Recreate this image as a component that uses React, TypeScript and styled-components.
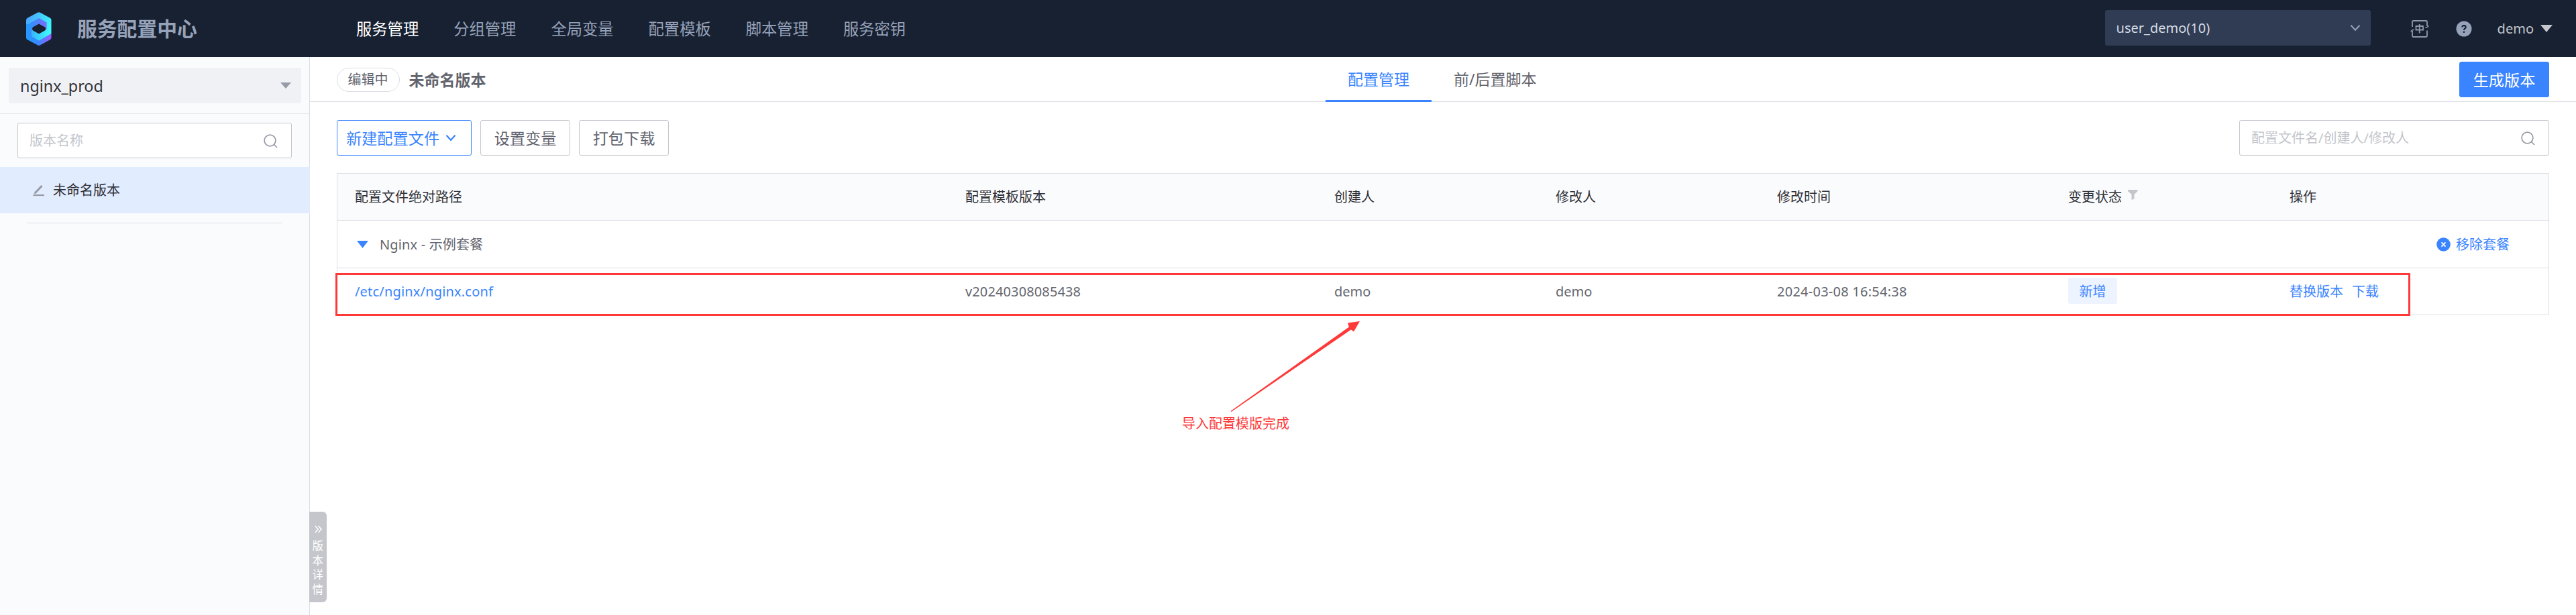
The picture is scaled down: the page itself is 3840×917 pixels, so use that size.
import React from 'react';
import styled, { createGlobalStyle, css } from 'styled-components';

const GlobalStyle = createGlobalStyle`
  * { box-sizing: border-box; }
  html, body { margin: 0; padding: 0; background: #fff; overflow: hidden; }
  body {
    font-family: "Noto Sans", "Noto Sans CJK SC", sans-serif;
    font-size: 20px;
    line-height: 28px;
    color: #63656e;
    white-space: nowrap;
  }
  svg { display: block; flex: none; }
`;

const Page = styled.div`
  position: relative;
  display: flex;
  flex-direction: column;
  width: 3840px;
  height: 917px;
  overflow: hidden;
`;

/* ---------- top bar ---------- */
const TopBar = styled.header`
  display: flex;
  align-items: center;
  height: 85px;
  flex: none;
  padding: 0 35px 0 39px;
  background: #182132;
`;
const Brand = styled.div`
  display: flex;
  align-items: center;
  gap: 38px;
  width: 492px;
`;
const BrandName = styled.span`
  font-size: 29.8px;
  line-height: 40px;
  font-weight: 700;
  color: #96a2b9;
`;
const Nav = styled.nav`
  display: flex;
  gap: 52px;
  flex: 1;
`;
const NavItem = styled.a<{ $active?: boolean }>`
  font-size: 23.3px;
  line-height: 32px;
  color: ${(p) => (p.$active ? '#fff' : '#96a2b9')};
`;
const BizSelect = styled.div`
  display: flex;
  align-items: center;
  justify-content: space-between;
  width: 396px;
  height: 53px;
  margin: -2px 59px 0 0;
  padding: 0 15px 0 17px;
  border-radius: 3px;
  background: #303c53;
  color: #d3d9e4;
`;
const HeaderIcon = styled.span<{ $gap: number }>`
  margin-right: ${(p) => p.$gap}px;
`;
const UserMenu = styled.div`
  display: flex;
  align-items: center;
  gap: 10px;
  color: #c4c6cc;
`;

/* ---------- sidebar ---------- */
const Body = styled.div`
  display: flex;
  flex: 1;
  min-height: 0;
`;
const Sidebar = styled.aside`
  position: relative;
  width: 462px;
  flex: none;
  background: #fafbfd;
  border-right: 1px solid #dcdee5;
`;
const ServiceWrap = styled.div`
  height: 85px;
  padding: 16px 12px 0 13px;
  border-bottom: 1px solid #e5e7ec;
`;
const ServiceSelect = styled.div`
  display: flex;
  align-items: center;
  justify-content: space-between;
  height: 53px;
  padding: 0 15px 0 17px;
  border-radius: 3px;
  background: #f0f1f5;
  color: #313238;
  font-size: 23.3px;
`;
const SearchBox = styled.div<{ $width: number }>`
  display: flex;
  align-items: center;
  justify-content: space-between;
  width: ${(p) => p.$width}px;
  height: 53px;
  padding: 1px 20px 0 17px;
  border: 1px solid #c4c6cc;
  border-radius: 3px;
  background: #fff;
  color: #c4c6cc;
`;
const SideSearch = styled.div`
  padding: 13px 26px;
`;
const VersionItem = styled.div`
  display: flex;
  align-items: center;
  gap: 12px;
  height: 69px;
  padding: 1px 0 0 49px;
  margin-right: -1px;
  background: #e1ecff;
  color: #313238;
`;
const SideDivider = styled.div`
  height: 1px;
  margin: 14px 40px 0;
  background: #dcdee5;
`;
const DetailHandle = styled.div`
  position: absolute;
  left: 461px;
  top: 678px;
  display: flex;
  flex-direction: column;
  align-items: center;
  width: 26px;
  height: 135px;
  padding-top: 20px;
  border-radius: 0 6px 6px 0;
  background: #c4c6cc;
  color: #fff;
  font-size: 16.5px;
  line-height: 21.7px;
`;
const HandleText = styled.span`
  width: 17px;
  margin-top: 8px;
  white-space: normal;
  word-break: break-all;
`;

/* ---------- main ---------- */
const Main = styled.main`
  flex: 1;
  min-width: 0;
`;
const VersionBar = styled.div`
  display: grid;
  grid-template-columns: 1474px 1fr auto;
  height: 67px;
  padding: 0 40px;
  border-bottom: 1px solid #dcdee5;
`;
const VersionInfo = styled.div`
  display: flex;
  align-items: center;
  gap: 14px;
`;
const StatusPill = styled.span`
  display: flex;
  align-items: center;
  height: 36px;
  padding: 0 16px 0 15.5px;
  border: 1px solid #dcdee5;
  border-radius: 18px;
`;
const VersionName = styled.strong`
  font-size: 23px;
  line-height: 32px;
  font-weight: 700;
`;
const Tabs = styled.div`
  display: flex;
`;
const Tab = styled.span<{ $active?: boolean }>`
  height: 67px;
  padding: 0 33px;
  font-size: 23px;
  line-height: 67px;
  ${(p) =>
    p.$active &&
    css`
      color: #3a84ff;
      border-bottom: 3px solid #3a84ff;
    `}
`;
const Button = styled.button<{ $kind?: 'primary' | 'outline'; $width: number }>`
  display: flex;
  align-items: center;
  justify-content: center;
  gap: 9px;
  width: ${(p) => p.$width}px;
  height: 53px;
  padding: 0;
  border: 1px solid #c4c6cc;
  border-radius: 3px;
  background: #fff;
  color: #63656e;
  font: 400 23.2px/32px "Noto Sans", "Noto Sans CJK SC", sans-serif;
  ${(p) =>
    p.$kind === 'primary' &&
    css`
      margin-top: 7px;
      border-color: #3a84ff;
      background: #3a84ff;
      color: #fff;
    `}
  ${(p) =>
    p.$kind === 'outline' &&
    css`
      justify-content: flex-start;
      padding-left: 13px;
      border-color: #3a84ff;
      color: #3a84ff;
    `}
`;
const Content = styled.section`
  padding: 27px 40px 0;
`;
const Toolbar = styled.div`
  display: flex;
  gap: 13px;
`;
const ToolbarSearch = styled.div`
  margin-left: auto;
`;

const Table = styled.div`
  position: relative;
  margin-top: 26px;
  border: 1px solid #dcdee5;
  border-bottom: 0;
`;
const Row = styled.div<{ $head?: boolean }>`
  display: grid;
  grid-template-columns: 910px 550px 330px 330px 434px 330px 1fr;
  align-items: center;
  height: 70px;
  border-bottom: 1px solid #dcdee5;
  ${(p) =>
    p.$head &&
    css`
      background: #fafbfd;
      color: #313238;
    `}
`;
const Cell = styled.div<{ $link?: boolean; $spacing?: number }>`
  display: flex;
  align-items: center;
  gap: 13px;
  padding: 1px 0 0 26px;
  letter-spacing: ${(p) => p.$spacing ?? 0}px;
  ${(p) => p.$link && 'color: #3a84ff;'}
`;
const GroupRow = styled.div`
  display: flex;
  align-items: center;
  justify-content: space-between;
  height: 71px;
  padding: 1px 58px 0 29px;
  border-bottom: 1px solid #dcdee5;
`;
const GroupTitle = styled.span`
  display: flex;
  align-items: center;
  gap: 17px;
  letter-spacing: 0.15px;
`;
const RemoveLink = styled.a`
  display: flex;
  align-items: center;
  gap: 8px;
  color: #3a84ff;
`;
const Tag = styled.span`
  height: 39px;
  padding: 0 16.5px;
  border-radius: 3px;
  background: #edf4ff;
  color: #3a84ff;
  line-height: 41px;
  margin-top: -3px;
`;
const FilterIcon = styled.span`
  margin: -7px 0 0 -4px;
`;

/* ---------- annotation over the page ---------- */
const Highlight = styled.div`
  position: absolute;
  left: 500px;
  top: 407px;
  width: 3093px;
  height: 64px;
  border: 3px solid #ff3838;
`;
const Arrow = styled.svg`
  position: absolute;
  left: 1830px;
  top: 475px;
`;
const Note = styled.span`
  position: absolute;
  left: 1762px;
  top: 618px;
  color: #ff3838;
`;

const Logo = () => (
  <svg width="38" height="50" viewBox="0 0 38 50">
    <defs>
      <linearGradient id="lgTop" x1="0" y1="0" x2="1" y2="0.4">
        <stop offset="0" stopColor="#4c9bff" />
        <stop offset="1" stopColor="#3cf6fb" />
      </linearGradient>
      <linearGradient id="lgLeft" x1="0" y1="0" x2="1" y2="0">
        <stop offset="0" stopColor="#10a0ff" />
        <stop offset="0.5" stopColor="#3f86ff" />
        <stop offset="1" stopColor="#9a5cff" />
      </linearGradient>
      <linearGradient id="lgInner" x1="0" y1="0" x2="1" y2="0">
        <stop offset="0" stopColor="#1e9bff" />
        <stop offset="1" stopColor="#7a6cff" />
      </linearGradient>
      <linearGradient id="lgBottom" x1="0" y1="0" x2="1" y2="0">
        <stop offset="0" stopColor="#38b4ff" />
        <stop offset="1" stopColor="#3cf0fb" />
      </linearGradient>
    </defs>
    <path d="M0 17 L19 25 L37.5 32 V38 Q37.5 40 36 41 L21 49.2 Q19 50.4 17 49.2 L1.5 41 Q0 40 0 38Z" fill="url(#lgLeft)" />
    <path d="M0 18 V12 Q0 10 1.5 9 L17 .8 Q19 -.4 21 .8 L36 9 Q37.5 10 37.5 12 V32 L19 42.5 L8 36 V20 Z" fill="url(#lgTop)" />
    <path d="M0 19.5 L19 9 L30.5 15.5 V27 L19 20 L9 25 V40 L0 38 Z" fill="url(#lgInner)" />
    <path d="M8 27 L19 33 L30.5 26 V35.5 L19 42 L8 35.5Z" fill="url(#lgBottom)" />
    <path d="M19 17.5 L28 22.5 Q30 25 28 27.5 L19 32.5 L10 27.5 Q8 25 10 22.5Z" fill="#182132" />
  </svg>
);

const Chevron = ({ color, w = 16, sw = 2 }: { color: string; w?: number; sw?: number }) => (
  <svg width={w} height="11" viewBox="0 0 16 11" fill="none" stroke={color} strokeWidth={sw}>
    <path d="M1.5 1.8 L8 8.8 L14.5 1.8" />
  </svg>
);

const Caret = ({ color, w, h }: { color: string; w: number; h: number }) => (
  <svg width={w} height={h} viewBox="0 0 16 10" preserveAspectRatio="none">
    <path d="M0 0H16L8 10Z" fill={color} />
  </svg>
);

const SearchIcon = () => (
  <svg width="21" height="21" viewBox="0 0 21 21" fill="none" stroke="#979ba5" strokeWidth="1.7">
    <circle cx="9.5" cy="9.5" r="8.4" />
    <path d="M15.5 15.5 L20 20" />
  </svg>
);

const LangIcon = () => (
  <svg width="28" height="26" viewBox="0 0 28 26" fill="none" stroke="#8f99ab" strokeWidth="1.8">
    <path d="M3 10V2.5Q3 1 4.5 1H23.500Q25 1 25 2.500V9M25 15.500V23.500Q25 25 23.500 25H4.500Q3 25 3 23.500V15.500" />
    <path d="M22.500 11H24.500L27.500 8.500M5.500 14.500H3.500L0.500 17" strokeWidth="1.600" />
    <path d="M8.500 9H19V14.500H8.500ZM13.700 6V19.500" />
  </svg>
);

const HelpIcon = () => (
  <svg width="24" height="24" viewBox="0 0 24 24" fill="none">
    <circle cx="12" cy="12" r="11.500" fill="#96a2b9" />
    <path d="M9.300 9.600Q9.300 7.100 12 7.100Q14.700 7.100 14.700 9.400Q14.700 10.700 13.300 11.600Q12 12.400 12 13.900" stroke="#182132" strokeWidth="2.100" />
    <circle cx="12" cy="16.700" r="1.300" fill="#182132" />
  </svg>
);

const PencilIcon = () => (
  <svg width="18" height="18" viewBox="0 0 18 18" fill="none" stroke="#979ba5">
    <path d="M4 12 L13.500 2" strokeWidth="3" />
    <path d="M2.200 13.800 L3 10.800 L5.200 13Z" fill="#979ba5" strokeWidth="0.500" />
    <path d="M0.500 16H17" strokeWidth="2.200" />
  </svg>
);

const RemoveIcon = () => (
  <svg width="21" height="21" viewBox="0 0 21 21">
    <circle cx="10.500" cy="10.500" r="10.300" fill="#3a84ff" />
    <path d="M7.500 7.300L13.500 13.700M13.500 7.300L7.500 13.700" stroke="#fff" strokeWidth="1.800" />
  </svg>
);

const FunnelIcon = () => (
  <svg width="15" height="15" viewBox="0 0 15 15">
    <path d="M0 0H14.500V2L9.500 7V13.500L5.500 15V7L0 2Z" fill="#c4c6cc" />
  </svg>
);

const DoubleChevron = () => (
  <svg width="11" height="12" viewBox="0 0 11 12" fill="none" stroke="#fff" strokeWidth="1.500">
    <path d="M.7 1L5.200 6L.7 11M5.500 1L10 6L5.500 11" />
  </svg>
);

const navItems = ['服务管理', '分组管理', '全局变量', '配置模板', '脚本管理', '服务密钥'];
const columns = ['配置文件绝对路径', '配置模板版本', '创建人', '修改人', '修改时间', '变更状态', '操作'];

export default function App() {
  return (
    <>
      <GlobalStyle />
      <Page>
        <TopBar>
          <Brand>
            <Logo />
            <BrandName>服务配置中心</BrandName>
          </Brand>
          <Nav>
            {navItems.map((name, i) => (
              <NavItem key={name} $active={i === 0}>{name}</NavItem>
            ))}
          </Nav>
          <BizSelect>
            user_demo(10)
            <Chevron color="#96a2b9" />
          </BizSelect>
          <HeaderIcon $gap={40}><LangIcon /></HeaderIcon>
          <HeaderIcon $gap={38}><HelpIcon /></HeaderIcon>
          <UserMenu>
            demo
            <Caret color="#c4c6cc" w={18} h={11} />
          </UserMenu>
        </TopBar>

        <Body>
          <Sidebar>
            <ServiceWrap>
              <ServiceSelect>
                nginx_prod
                <Caret color="#979ba5" w={16} h={9} />
              </ServiceSelect>
            </ServiceWrap>
            <SideSearch>
              <SearchBox $width={409}>
                版本名称
                <SearchIcon />
              </SearchBox>
            </SideSearch>
            <VersionItem>
              <PencilIcon />
              未命名版本
            </VersionItem>
            <SideDivider />
            <DetailHandle>
              <DoubleChevron />
              <HandleText>版本详情</HandleText>
            </DetailHandle>
          </Sidebar>

          <Main>
            <VersionBar>
              <VersionInfo>
                <StatusPill>编辑中</StatusPill>
                <VersionName>未命名版本</VersionName>
              </VersionInfo>
              <Tabs>
                <Tab $active>配置管理</Tab>
                <Tab>前/后置脚本</Tab>
              </Tabs>
              <Button $kind="primary" $width={134}>生成版本</Button>
            </VersionBar>

            <Content>
              <Toolbar>
                <Button $kind="outline" $width={201}>
                  新建配置文件
                  <Chevron color="#3a84ff" w={16} sw={2.2} />
                </Button>
                <Button $width={134}>设置变量</Button>
                <Button $width={134}>打包下载</Button>
                <ToolbarSearch>
                  <SearchBox $width={462}>
                    配置文件名/创建人/修改人
                    <SearchIcon />
                  </SearchBox>
                </ToolbarSearch>
              </Toolbar>

              <Table>
                <Row $head>
                  {columns.map((c) => (
                    <Cell key={c}>
                      {c}
                      {c === '变更状态' && <FilterIcon><FunnelIcon /></FilterIcon>}
                    </Cell>
                  ))}
                </Row>
                <GroupRow>
                  <GroupTitle>
                    <Caret color="#3a84ff" w={17} h={11} />
                    Nginx - 示例套餐
                  </GroupTitle>
                  <RemoveLink>
                    <RemoveIcon />
                    移除套餐
                  </RemoveLink>
                </GroupRow>
                <Row>
                  <Cell $link $spacing={0.18}>/etc/nginx/nginx.conf</Cell>
                  <Cell $spacing={0.12}>v20240308085438</Cell>
                  <Cell>demo</Cell>
                  <Cell>demo</Cell>
                  <Cell $spacing={0.25}>2024-03-08 16:54:38</Cell>
                  <Cell><Tag>新增</Tag></Cell>
                  <Cell $link>
                    <span>替换版本</span>
                    <span>下载</span>
                  </Cell>
                </Row>
              </Table>
            </Content>
          </Main>
        </Body>

        <Highlight />
        <Arrow width="200" height="142" viewBox="0 0 200 142">
          <path d="M4.500 138 L181 12.500 L179 6.500 L197 4 L188 19.500 L184 16.500 L5.500 139 Z" fill="#ff3838" />
        </Arrow>
        <Note>导入配置模版完成</Note>
      </Page>
    </>
  );
}
